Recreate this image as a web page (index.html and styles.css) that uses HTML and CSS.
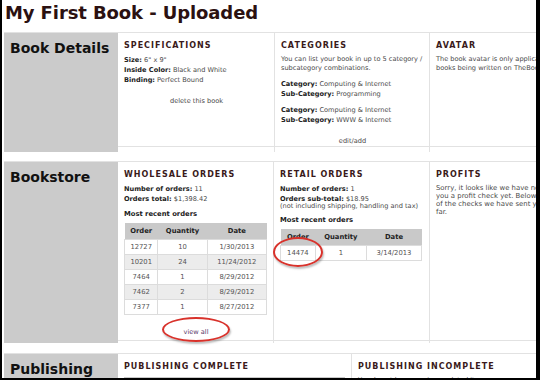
FILE: index.html
```html
<!DOCTYPE html>
<html lang="en">
<head>
    <meta charset="UTF-8">
    <meta name="viewport" content="width=device-width, initial-scale=1.0">
    <title>My First Book - Uploaded</title>
    <link rel="stylesheet" href="styles.css">
</head>
<body>
<div class="frame">
    <h1>My First Book - Uploaded</h1>

    <section class="block details">
        <div class="block-name">Book Details</div>
        <div class="panel">
            <h3>Specifications</h3>
            <p class="lines">
                <b>Size:</b> 6" x 9"<br>
                <b>Inside Color:</b> Black and White<br>
                <b>Binding:</b> Perfect Bound
            </p>
            <p class="action">delete this book</p>
        </div>
        <div class="panel">
            <h3>Categories</h3>
            <p>You can list your book in up to 5 category / subcategory combinations.</p>
            <p class="lines"><b>Category:</b> Computing &amp; Internet<br><b>Sub-Category:</b> Programming</p>
            <p class="lines"><b>Category:</b> Computing &amp; Internet<br><b>Sub-Category:</b> WWW &amp; Internet</p>
            <p class="action">edit/add</p>
        </div>
        <div class="panel">
            <h3>Avatar</h3>
            <p>The book avatar is only applicable to books being written on TheBookPatch.</p>
        </div>
    </section>

    <section class="block store">
        <div class="block-name">Bookstore</div>
        <div class="panel">
            <h3>Wholesale Orders</h3>
            <p class="lines"><b>Number of orders:</b> 11<br><b>Orders total:</b> $1,398.42</p>
            <h4>Most recent orders</h4>
            <table class="orders">
                <tr><th>Order</th><th>Quantity</th><th>Date</th></tr>
                <tr><td>12727</td><td>10</td><td>1/30/2013</td></tr>
                <tr><td>10201</td><td>24</td><td>11/24/2012</td></tr>
                <tr><td>7464</td><td>1</td><td>8/29/2012</td></tr>
                <tr><td>7462</td><td>2</td><td>8/29/2012</td></tr>
                <tr><td>7377</td><td>1</td><td>8/27/2012</td></tr>
            </table>
            <p class="action view-all"><span class="link">view all</span><span class="circle"></span></p>
        </div>
        <div class="panel">
            <h3>Retail Orders</h3>
            <p class="lines"><b>Number of orders:</b> 1<br><b>Orders sub-total:</b> $18.95<span class="note">(not including shipping, handling and tax)</span></p>
            <h4>Most recent orders</h4>
            <table class="orders retail">
                <tr><th>Order</th><th>Quantity</th><th>Date</th></tr>
                <tr><td class="marked">14474<span class="circle"></span></td><td>1</td><td>3/14/2013</td></tr>
            </table>
        </div>
        <div class="panel">
            <h3>Profits</h3>
            <p class="tight">Sorry, it looks like we have not sent you a profit check yet. Below is a list of the checks we have sent you so far.</p>
        </div>
    </section>

    <section class="block publishing">
        <div class="block-name">Publishing</div>
        <div class="panel">
            <h3>Publishing Complete</h3>
            <div class="bar"></div>
        </div>
        <div class="panel">
            <h3>Publishing Incomplete</h3>
            <p>You do not have any incompleted items.</p>
        </div>
    </section>
</div>
</body>
</html>
```

FILE: styles.css
```css
html {
    background: #000;
}
body {
    margin: 0 4px 0 2px;
    height: 378px;
    background: #fff;
    font-family: "DejaVu Sans", Verdana, sans-serif;
    color: #4a4a4a;
    overflow: hidden;
}
.frame {
    width: 534px;
    height: 378px;
    overflow: hidden;
}
h1 {
    margin: 0;
    padding: 2px 0 0 3px;
    height: 30px;
    font-size: 18px;
    color: #2b1111;
    letter-spacing: -0.1px;
}
.block {
    display: grid;
    width: max-content;
    margin-left: 2px;
    border-top: 1px solid #e2e2e2;
    border-bottom: 1px solid #e2e2e2;
}
.details {
    grid-template-columns: 114px 157px 155px 152px;
    height: 113px;
}
.store {
    grid-template-columns: 114px 156px 156px 143px;
    margin-top: 14px;
    height: 178px;
}
.publishing {
    grid-template-columns: 114px 234px 230px;
    margin-top: 12px;
    height: 60px;
}
.block-name {
    background: #cbcbcb;
    color: #111;
    font-weight: bold;
    font-size: 14px;
    padding: 7px 6px;
}
.panel {
    border-right: 1px solid #e2e2e2;
    padding: 6px 5px 0 6px;
    font-size: 6.6px;
    line-height: 9px;
}
h3 {
    margin: 2px 0 5px;
    font-size: 8px;
    letter-spacing: 1px;
    text-transform: uppercase;
    color: #3a1a1a;
}
h4 {
    margin: 4px 0 4px;
    font-size: 6.8px;
    color: #222;
}
p {
    margin: 0 0 6px;
}
p.tight {
    font-size: 6.9px;
    line-height: 8px;
}
.lines {
    line-height: 10px;
}
.note {
    display: block;
    line-height: 7px;
    margin-top: -1px;
}
b {
    color: #222;
}
.action {
    text-align: center;
    margin-top: 12px;
}
.orders {
    border-collapse: collapse;
    width: 143px;
    text-align: center;
    font-size: 6.8px;
    color: #555;
}
.orders th {
    background: #c9c9c9;
    color: #222;
    height: 16px;
    padding: 0;
}
.orders td {
    border: 1px solid #dcdcdc;
    height: 14px;
    padding: 0;
}
.orders tr:nth-child(odd) td {
    background: #ececec;
}
.retail {
    width: 142px;
}
.view-all {
    position: relative;
    margin-top: 13px;
}
.link {
    color: #5a3a6a;
}
.circle {
    position: absolute;
    border: 2px solid #d8322b;
    border-radius: 50%;
    box-shadow: 1px 2px 2px rgba(0, 0, 0, 0.25);
}
.view-all .circle {
    left: 38px;
    top: -11px;
    width: 64px;
    height: 21px;
}
.marked {
    position: relative;
}
.marked .circle {
    left: -8px;
    top: -9px;
    width: 46px;
    height: 26px;
}
.bar {
    height: 10px;
    margin-top: 6px;
    width: 221px;
    background: #c9c9c9;
}
```
